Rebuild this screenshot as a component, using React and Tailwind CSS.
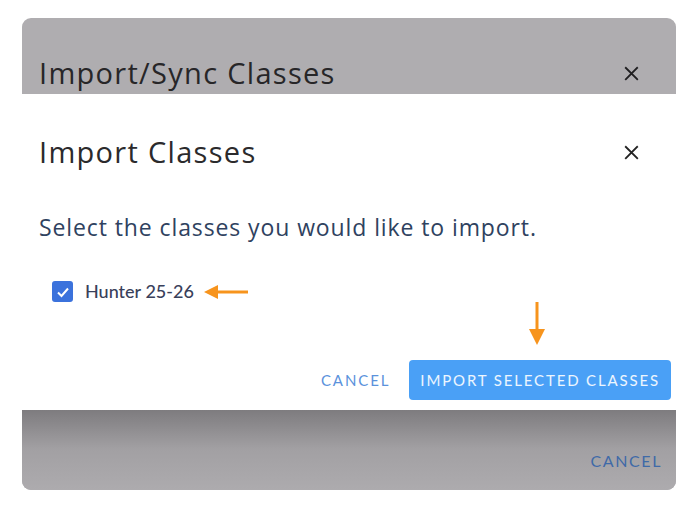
import React from "react";

const CloseIcon = ({ className }) => (
  <svg viewBox="0 0 16 16" className={className} fill="none" stroke="currentColor" strokeWidth="2" strokeLinecap="square">
    <path d="M2 2L14 14M14 2L2 14" />
  </svg>
);

const ArrowLeft = () => (
  <svg width="46" height="16" viewBox="0 0 46 16">
    <path d="M12 8H44" stroke="#f7941d" strokeWidth="3" />
    <path d="M0 8L14 1V15Z" fill="#f7941d" />
  </svg>
);

const ArrowDown = () => (
  <svg width="18" height="43" viewBox="0 0 18 43">
    <path d="M9 0V29" stroke="#f7941d" strokeWidth="3" />
    <path d="M1 27H17L9 43Z" fill="#f7941d" />
  </svg>
);

export default function App() {
  return (
    <div className="relative w-[698px] h-[508px] bg-white overflow-hidden font-['Lato','Open_Sans',sans-serif]">
      {/* back dialog, dimmed by overlay */}
      <div className="mt-[18px] mx-[22px] h-[472px] rounded-[9px] bg-[#afadb0] flex flex-col overflow-hidden">
        <div className="flex items-center justify-between pl-[17px] pr-[37px] pt-[36px]">
          <h2 className="text-[29px] leading-[38px] tracking-[1.3px] text-[#272628] font-['Open_Sans',sans-serif]">Import/Sync Classes</h2>
          <CloseIcon className="w-[15px] h-[15px] text-[#1f1e20]" />
        </div>
        <div className="flex-1" />
        <div className="h-[82px] bg-gradient-to-b from-[#7c7a7d] via-[#a2a0a3] to-[#adabae] flex items-end justify-end pr-[14px] pb-[17px]">
          <span className="text-[16px] tracking-[1.6px] text-[#3f6aa8]">CANCEL</span>
        </div>
      </div>

      {/* front dialog */}
      <div className="absolute left-0 right-0 top-[94px] h-[316px] bg-white flex flex-col pb-[10px]">
        <div className="flex items-center justify-between pl-[39px] pr-[59px] pt-[38px]">
          <h2 className="text-[29px] leading-[40px] tracking-[1.3px] text-[#2b2a2c] font-['Open_Sans',sans-serif]">Import Classes</h2>
          <CloseIcon className="w-[15px] h-[15px] text-[#222]" />
        </div>
        <p className="pl-[39px] mt-[40px] text-[23px] leading-[30px] tracking-[0.9px] text-[#2f4260] font-['Open_Sans',sans-serif]">
          Select the classes you would like to import.
        </p>
        <div className="flex items-center h-[27px] pl-[52px] mt-[36px]">
          <span className="w-[21px] h-[21px] rounded-[3px] bg-[#3b72dc] flex items-center justify-center">
            <svg viewBox="0 0 16 16" className="w-[16px] h-[16px]" fill="none" stroke="white" strokeWidth="2">
              <path d="M3 8.5L6.5 12L13 4.5" />
            </svg>
          </span>
          <span className="ml-[12px] text-[18px] font-medium text-[#39405a]">Hunter 25-26</span>
          <span className="ml-[10px] mt-[1px]"><ArrowLeft /></span>
        </div>
        <div className="flex justify-end pr-[152px] -mt-[3px]">
          <ArrowDown />
        </div>
        <div className="flex-1" />
        <div className="flex items-center justify-end gap-[19px] pr-[27px]">
          <span className="text-[15px] tracking-[1.9px] text-[#5b92dc]">CANCEL</span>
          <button className="h-[40px] px-[11px] rounded-[4px] bg-[#4aa0f6] text-[15px] tracking-[1.85px] text-white/90">
            IMPORT SELECTED CLASSES
          </button>
        </div>
      </div>
    </div>
  );
}
